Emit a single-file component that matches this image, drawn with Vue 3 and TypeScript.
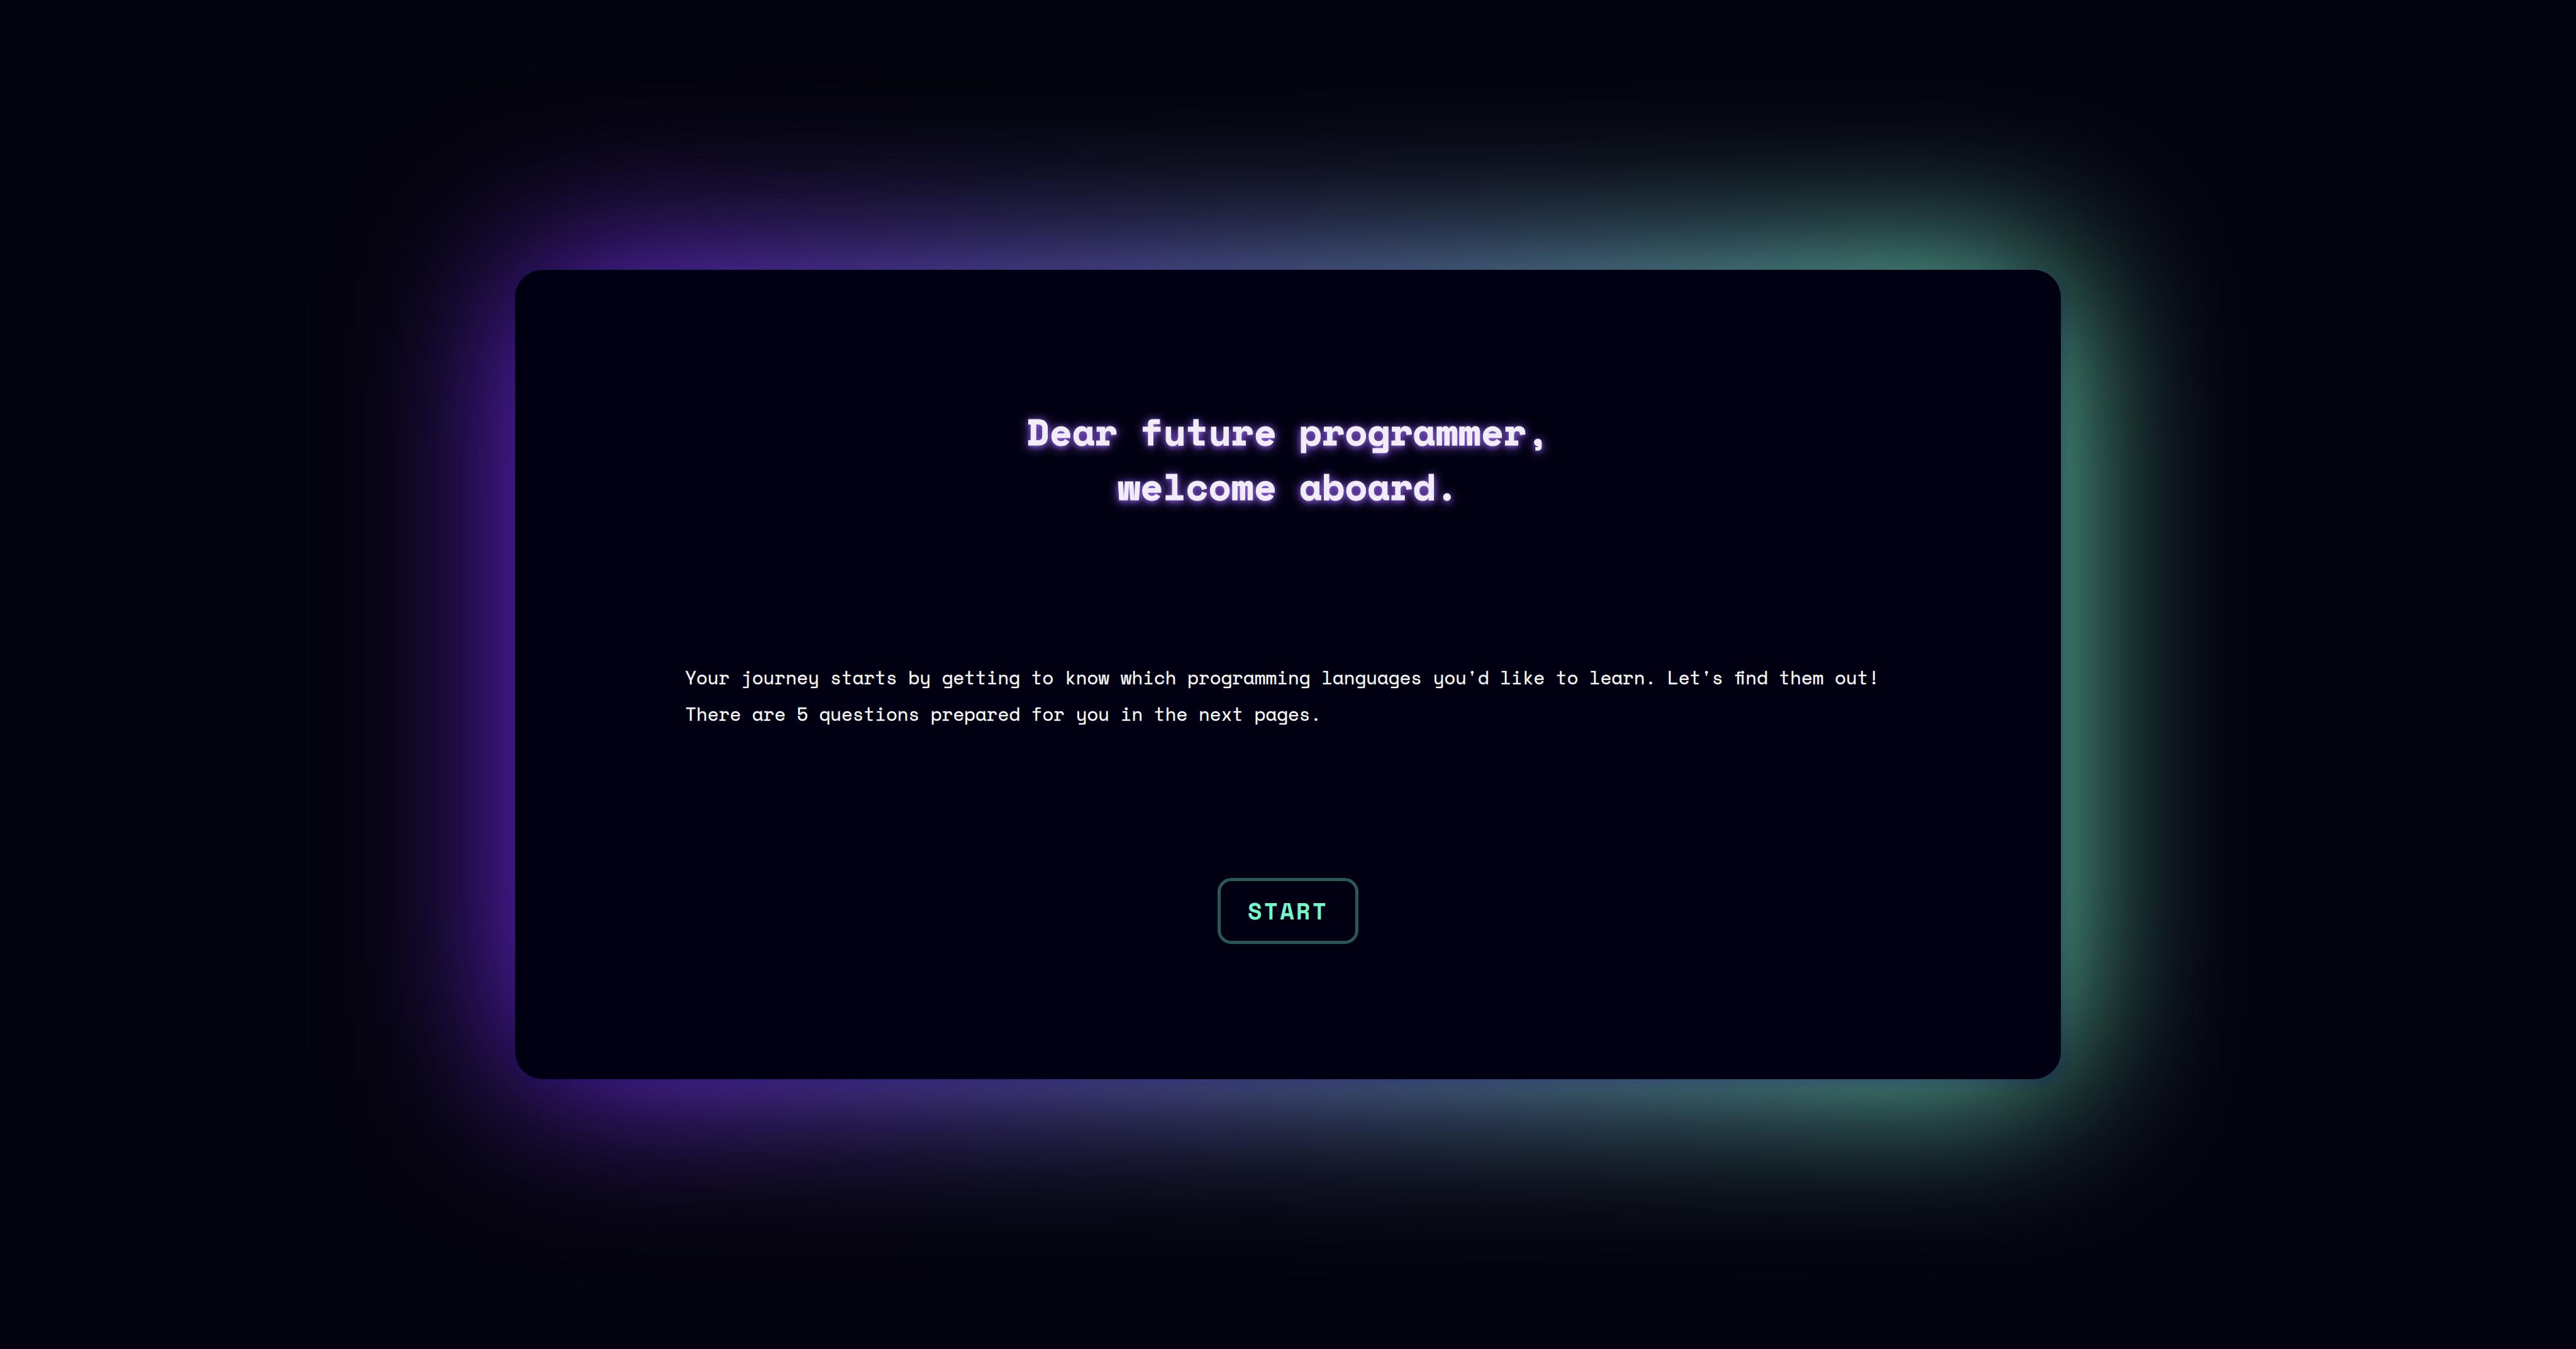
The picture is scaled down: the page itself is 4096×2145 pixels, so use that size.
<script setup lang="ts">
const titleLines: string[] = ['Dear future programmer,', 'welcome aboard.']
const introLines: string[] = [
  "Your journey starts by getting to know which programming languages you'd like to learn. Let's find them out!",
  'There are 5 questions prepared for you in the next pages.',
]
</script>

<template>
  <main class="page">
    <section class="card">
      <h1 class="title">
        <span v-for="line in titleLines" :key="line" class="line">{{ line }}</span>
      </h1>
      <p class="intro">
        <span v-for="line in introLines" :key="line" class="line">{{ line }}</span>
      </p>
      <button type="button" class="start">START</button>
    </section>
  </main>
</template>

<style>
body {
  margin: 0;
  background: #04040d;
}
</style>

<style scoped>
.page {
  display: flex;
  align-items: center;
  justify-content: center;
  min-height: 100vh;
  overflow: hidden;
  background: #04040d;
  font-family: "Space Mono", "DejaVu Sans Mono", monospace;
}

.card {
  position: relative;
  z-index: 0;
  box-sizing: border-box;
  display: flex;
  flex-direction: column;
  align-items: center;
  justify-content: space-between;
  width: 60vw;
  min-height: 60vh;
  padding: 213px 0 215px;
  border-radius: 44px;
}

/* Blurred gradient that glows around the card */
.card::before {
  content: "";
  position: absolute;
  inset: 0;
  z-index: -2;
  border-radius: 44px;
  background: linear-gradient(90deg, #7722f5, #75f5c4);
  filter: blur(136px);
}

.card::after {
  content: "";
  position: absolute;
  inset: 0;
  z-index: -1;
  border-radius: 44px;
  background: #000012;
  box-shadow: 6px 8px 16px rgba(20, 20, 110, 0.25);
}

.line {
  display: block;
  white-space: nowrap;
}

.title {
  margin: 0;
  color: #f0ecf8;
  font-size: 59px;
  font-weight: 700;
  line-height: 87px;
  text-align: center;
  text-shadow: 0 2px 18px #9a66f0, 0 2px 8px #7a50c8;
  -webkit-text-stroke: 1px #f0ecf8;
}

.intro {
  width: 78%;
  margin: 0;
  color: #ffffff;
  font-size: 29px;
  line-height: 58px;
  font-variant-ligatures: common-ligatures discretionary-ligatures;
  -webkit-text-stroke: 1px rgba(255, 255, 255, 0.4);
}

.start {
  padding: 26px 43px;
  border: 5px solid #2a5855;
  border-radius: 22px;
  background: transparent;
  color: #75f5ca;
  font-family: inherit;
  font-size: 37px;
  font-weight: 700;
  line-height: 43px;
  letter-spacing: 3px;
  cursor: pointer;
}
</style>
